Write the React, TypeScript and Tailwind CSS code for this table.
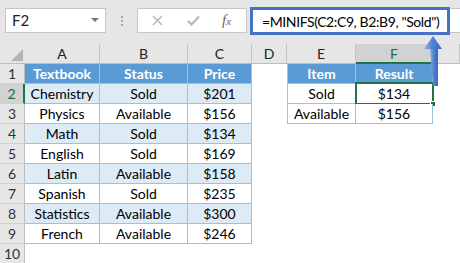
import clsx from "clsx";

const font = { fontFamily: "Lato, 'Open Sans', sans-serif" };

const letters = ["", "A", "B", "C", "D", "E", "F", ""];

const tableA = [
  ["Textbook", "Status", "Price"],
  ["Chemistry", "Sold", "$201"],
  ["Physics", "Available", "$156"],
  ["Math", "Sold", "$134"],
  ["English", "Sold", "$169"],
  ["Latin", "Available", "$158"],
  ["Spanish", "Sold", "$235"],
  ["Statistics", "Available", "$300"],
  ["French", "Available", "$246"],
];

const tableE = [
  ["Item", "Result"],
  ["Sold", "$134"],
  ["Available", "$156"],
];

function ColHeader({ col }: { col: number }) {
  const selected = col === 6;
  return (
    <div
      className={clsx(
        "flex items-center justify-center text-[14px]",
        col === 0 ? "" : "border-r border-[#c4c4c4]",
        selected
          ? "bg-[#d2d2d2] text-[#1e6b41] border-b-2 border-b-[#217346]"
          : "bg-[#e6e6e6] text-[#222] border-b border-b-[#bdbdbd]"
      )}
    >
      {col === 0 ? (
        <svg width="25" height="20" viewBox="0 0 25 20">
          <polygon points="23,5 23,17 11,17" fill="#b4b4b4" />
        </svg>
      ) : (
        letters[col]
      )}
    </div>
  );
}

function RowHeader({ row }: { row: number }) {
  const selected = row === 2;
  return (
    <div
      className={clsx(
        "flex items-center justify-center text-[14px] border-b border-[#d0d0d0]",
        selected
          ? "bg-[#d2d2d2] text-[#1e6b41] border-r-2 border-r-[#217346]"
          : "bg-[#e6e6e6] text-[#333] border-r border-r-[#bdbdbd]"
      )}
    >
      {row}
    </div>
  );
}

function Cell({ row, col }: { row: number; col: number }) {
  // columns A-C: table one, E-F: table two
  if (col >= 1 && col <= 3 && row <= 9) {
    const text = tableA[row - 1][col - 1];
    const head = row === 1;
    const band = row % 2 === 0;
    return (
      <div
        className={clsx(
          "flex items-center justify-center text-[14px] border-r border-b border-[#9bc2e6]",
          head && "bg-[#5b9bd5] text-white font-bold",
          !head && band && "bg-[#ddebf7] text-black",
          !head && !band && "bg-white text-black"
        )}
      >
        {text}
      </div>
    );
  }
  if ((col === 5 || col === 6) && row <= 3) {
    const text = tableE[row - 1][col - 5];
    const head = row === 1;
    return (
      <div
        className={clsx(
          "relative flex items-center justify-center text-[14px] border-r border-b border-[#9bc2e6]",
          col === 5 && "border-l",
          head ? "bg-[#5b9bd5] text-white font-bold" : "bg-white text-black"
        )}
      >
        {text}
        {row === 2 && col === 6 && (
          <>
            <div className="absolute -left-[1px] -top-[2px] w-[79px] h-[23px] border-2 border-[#217346]" />
            <div className="absolute -right-[4px] -bottom-[4px] w-[6px] h-[6px] bg-[#217346] border border-white" />
          </>
        )}
      </div>
    );
  }
  return <div className="bg-white" />;
}

export default function App() {
  const rows = Array.from({ length: 10 }, (_, i) => i + 1);
  const cols = [1, 2, 3, 4, 5, 6, 7];
  return (
    <div className="relative w-[460px] h-[263px] overflow-hidden bg-white" style={font}>
      {/* formula bar */}
      <div className="flex items-start h-[44px] bg-[#e6e6e6] pt-[8px]">
        <div className="ml-[5px] w-[101px] h-[25px] bg-white border border-[#c6c6c6] flex items-center pl-[6px] pr-[6px] text-[15px] text-[#222]">
          <span className="flex-1">F2</span>
          <svg width="8" height="5" viewBox="0 0 8 5">
            <polygon points="0,0 8,0 4,4" fill="#777" />
          </svg>
        </div>
        <div className="w-[31px] h-[25px] flex flex-col items-center justify-center gap-[2px]">
          <span className="w-[2px] h-[2px] bg-[#a8a8a8]" />
          <span className="w-[2px] h-[2px] bg-[#a8a8a8]" />
          <span className="w-[2px] h-[2px] bg-[#a8a8a8]" />
        </div>
        <div className="w-[110px] h-[25px] bg-white border border-[#c6c6c6] flex items-center">
          <svg className="ml-[14px]" width="11" height="11" viewBox="0 0 11 11">
            <path d="M1 1 L10 10 M10 1 L1 10" stroke="#b4b4b4" strokeWidth="1.4" />
          </svg>
          <svg className="ml-[24px]" width="13" height="11" viewBox="0 0 13 11">
            <path d="M1 6 L4.5 9.5 L12 1.5" stroke="#b4b4b4" strokeWidth="2" fill="none" />
          </svg>
          <span
            className="ml-[22px] text-[15px] italic text-[#666]"
            style={{ fontFamily: "'Liberation Serif', serif" }}
          >
            f<span className="text-[11px]">x</span>
          </span>
        </div>
        <div className="ml-[3px] -mt-[1px] w-[200px] h-[28px] bg-white border-[3px] border-[#4472c4] flex items-center pl-[9px] text-[14px] tracking-[-0.4px] text-black whitespace-nowrap">
          =MINIFS(C2:C9, B2:B9, "Sold")
        </div>
        <div className="flex-1 h-[25px] bg-white border-y border-[#c6c6c6]" />
      </div>

      {/* sheet */}
      <div className="grid grid-cols-[25px_75px_88px_64px_35px_69px_77px_27px] auto-rows-[20px]">
        <ColHeader col={0} />
        {cols.map((c) => (
          <ColHeader key={c} col={c} />
        ))}
        {rows.map((r) => (
          <div key={r} className="contents">
            <RowHeader row={r} />
            {cols.map((c) => (
              <Cell key={c} row={r} col={c} />
            ))}
          </div>
        ))}
      </div>

      {/* arrow */}
      <svg className="absolute left-[420px] top-[34px]" width="30" height="56" viewBox="0 0 30 56">
        <defs>
          <linearGradient id="ag" x1="0" y1="0" x2="1" y2="0">
            <stop offset="0" stopColor="#8fb0e6" />
            <stop offset="0.5" stopColor="#4f7fd0" />
            <stop offset="1" stopColor="#3c68bb" />
          </linearGradient>
        </defs>
        <polygon points="13,2 4,15 22,15" fill="url(#ag)" />
        <polygon points="10,15 18,15 18,52 13,52" fill="url(#ag)" />
      </svg>
    </div>
  );
}
